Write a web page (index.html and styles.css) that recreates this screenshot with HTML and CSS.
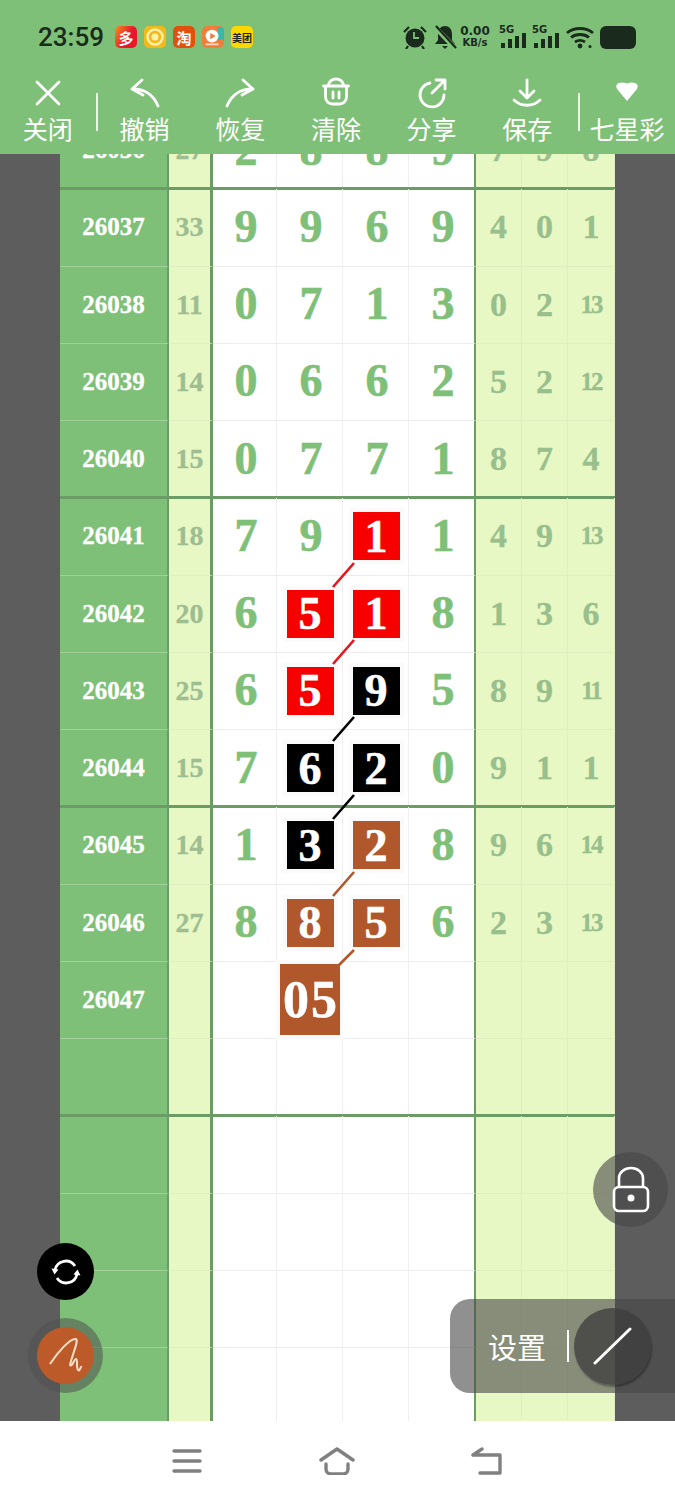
FILE: index.html
```html
<!DOCTYPE html>
<html lang="zh">
<head>
  <title>七星彩</title>
  <meta charset="UTF-8">
  <meta name="viewport" content="width=device-width, initial-scale=1.0">
  <link rel="stylesheet" href="styles.css">
</head>
<body>
  <div class="phone">
    <header class="top">
      <div class="status">
        <span class="status__time">23:59</span>
        <div class="status__apps">
          <span class="app app--red">多</span>
          <span class="app app--sun"><svg viewBox="0 0 22 22" width="22" height="22"><circle cx="11" cy="11" r="7.500" fill="none" stroke="#fff0a8" stroke-width="2.500"/><circle cx="11" cy="11" r="3.500" fill="#fff0a8"/></svg></span>
          <span class="app app--tao">淘</span>
          <span class="app app--video"><svg viewBox="0 0 24 22" width="24" height="22"><path d="M17 0h7v14h-7z" fill="#37b8a8"/><circle cx="11" cy="10" r="7" fill="#fff"/><path d="M9 6.500l6 3.500-6 3.500z" fill="#ef7d3c"/><path d="M4 19h14" stroke="#ffd9b8" stroke-width="2"/></svg></span>
          <span class="app app--mt">美团</span>
        </div>
        <div class="status__right">
          <svg class="ico" viewBox="0 0 26 24" width="26" height="24"><circle cx="13" cy="13" r="9.500" fill="#1a2a1c"/><path d="M12 7v6h5" fill="none" stroke="#7fc078" stroke-width="1.800"/><path d="M2 7l5-5M24 7l-5-5M6 21l-2 3M20 21l2 3" stroke="#1a2a1c" stroke-width="2.200"/></svg>
          <svg class="ico" viewBox="0 0 24 24" width="24" height="24"><path d="M12 1c-4 0-7 3-7 8v6l-3 4h20l-3-4V9c0-5-3-8-7-8z" fill="#1a2a1c"/><path d="M9 21h6l-3 3z" fill="#1a2a1c"/><path d="M1 1l21 22" stroke="#7fc078" stroke-width="5"/><path d="M3 1l20 22" stroke="#1a2a1c" stroke-width="2.200"/></svg>
          <div class="speed"><b>0.00</b><span>KB/s</span></div>
          <div class="signal"><i class="signal__tag">5G</i><svg viewBox="0 0 28 24" width="28" height="24"><path d="M2 18h4v5H2zM9 14h4v9H9zM16 11h4v12h-4zM23 8h4v15h-4z" fill="#1a2a1c"/></svg></div>
          <div class="signal"><i class="signal__tag">5G</i><svg viewBox="0 0 28 24" width="28" height="24"><path d="M2 18h4v5H2zM9 14h4v9H9zM16 11h4v12h-4zM23 8h4v15h-4z" fill="#1a2a1c"/></svg></div>
          <svg class="ico" viewBox="0 0 30 24" width="30" height="24"><path d="M2 8c7-6 19-6 26 0M6 12.500c5-4 13-4 18 0M10 17c3-2 7-2 10 0" fill="none" stroke="#1a2a1c" stroke-width="2.800"/><circle cx="15" cy="21" r="2.400" fill="#1a2a1c"/><circle cx="25" cy="21.500" r="1.500" fill="#1a2a1c"/></svg>
          <span class="battery"></span>
        </div>
      </div>
      <nav class="tools">
        <a class="tool"><svg viewBox="0 0 32 32" width="32" height="32"><path d="M5 5l22 22M27 5L5 27"/></svg><span>关闭</span></a>
        <i class="tools__sep"></i>
        <a class="tool"><svg viewBox="0 0 32 32" width="32" height="32"><path d="M13 3L3 12l11 6M3 12c13 0 21 5 26 17"/></svg><span>撤销</span></a>
        <a class="tool"><svg viewBox="0 0 32 32" width="32" height="32"><path d="M19 3l10 9-11 6M29 12C16 12 8 17 3 29"/></svg><span>恢复</span></a>
        <a class="tool"><svg viewBox="0 0 32 32" width="32" height="32"><path d="M8 9c1-4 4-7 8-7s7 3 8 7M3.500 9h25M5.500 9v11a7 7 0 0 0 7 7h7a7 7 0 0 0 7-7V9M13 15v6M19 15v6"/></svg><span>清除</span></a>
        <a class="tool"><svg viewBox="0 0 32 32" width="32" height="32"><path d="M14 6a12 12 0 1 0 14 12M16 16L29 3M20 3h9v9"/></svg><span>分享</span></a>
        <a class="tool"><svg viewBox="0 0 32 32" width="32" height="32"><path d="M16 3v18M9 14l7 7 7-7M3 23c7 7 19 7 26 0"/></svg><span>保存</span></a>
        <i class="tools__sep tools__sep--end"></i>
        <a class="tool"><svg viewBox="0 0 32 32" width="32" height="32"><path class="solid" d="M5.500 8c2-3 7-3 10.500-1.500 3.500-1.500 8.500-1.500 10.500 1.500.5 1.500 0 3-1 4.500L16 24 6.500 12.500c-1-1.500-1.500-3-1-4.500z"/></svg><span>七星彩</span></a>
      </nav>
    </header>

    <main class="stage">
      <div class="board">
        <div class="row"><b class="id">26036</b><b class="sum">27</b><b class="n">2</b><b class="n">8</b><b class="n">8</b><b class="n">9</b><b class="m">7</b><b class="m">9</b><b class="m">8</b></div>

        <div class="row row--first"><b class="id">26037</b><b class="sum">33</b><b class="n">9</b><b class="n">9</b><b class="n">6</b><b class="n">9</b><b class="m">4</b><b class="m">0</b><b class="m">1</b></div>
        <div class="row"><b class="id">26038</b><b class="sum">11</b><b class="n">0</b><b class="n">7</b><b class="n">1</b><b class="n">3</b><b class="m">0</b><b class="m">2</b><b class="m m--sm">13</b></div>
        <div class="row"><b class="id">26039</b><b class="sum">14</b><b class="n">0</b><b class="n">6</b><b class="n">6</b><b class="n">2</b><b class="m">5</b><b class="m">2</b><b class="m m--sm">12</b></div>
        <div class="row"><b class="id">26040</b><b class="sum">15</b><b class="n">0</b><b class="n">7</b><b class="n">7</b><b class="n">1</b><b class="m">8</b><b class="m">7</b><b class="m">4</b></div>

        <div class="row row--first"><b class="id">26041</b><b class="sum">18</b><b class="n">7</b><b class="n">9</b><b class="n"><em class="box box--red">1</em></b><b class="n">1</b><b class="m">4</b><b class="m">9</b><b class="m m--sm">13</b></div>
        <div class="row"><b class="id">26042</b><b class="sum">20</b><b class="n">6</b><b class="n"><em class="box box--red">5</em></b><b class="n"><em class="box box--red">1</em></b><b class="n">8</b><b class="m">1</b><b class="m">3</b><b class="m">6</b></div>
        <div class="row"><b class="id">26043</b><b class="sum">25</b><b class="n">6</b><b class="n"><em class="box box--red">5</em></b><b class="n"><em class="box box--black">9</em></b><b class="n">5</b><b class="m">8</b><b class="m">9</b><b class="m m--sm">11</b></div>
        <div class="row"><b class="id">26044</b><b class="sum">15</b><b class="n">7</b><b class="n"><em class="box box--black">6</em></b><b class="n"><em class="box box--black">2</em></b><b class="n">0</b><b class="m">9</b><b class="m">1</b><b class="m">1</b></div>

        <div class="row row--first"><b class="id">26045</b><b class="sum">14</b><b class="n">1</b><b class="n"><em class="box box--black">3</em></b><b class="n"><em class="box box--rust">2</em></b><b class="n">8</b><b class="m">9</b><b class="m">6</b><b class="m m--sm">14</b></div>
        <div class="row"><b class="id">26046</b><b class="sum">27</b><b class="n">8</b><b class="n"><em class="box box--rust">8</em></b><b class="n"><em class="box box--rust">5</em></b><b class="n">6</b><b class="m">2</b><b class="m">3</b><b class="m m--sm">13</b></div>
        <div class="row"><b class="id">26047</b><b class="sum"></b><b class="n"></b><b class="n"><em class="box box--big">05</em></b><b class="n"></b><b class="n"></b><b class="m"></b><b class="m"></b><b class="m"></b></div>
        <div class="row"><b class="id"></b><b class="sum"></b><b class="n"></b><b class="n"></b><b class="n"></b><b class="n"></b><b class="m"></b><b class="m"></b><b class="m"></b></div>

        <div class="row row--first"><b class="id"></b><b class="sum"></b><b class="n"></b><b class="n"></b><b class="n"></b><b class="n"></b><b class="m"></b><b class="m"></b><b class="m"></b></div>
        <div class="row"><b class="id"></b><b class="sum"></b><b class="n"></b><b class="n"></b><b class="n"></b><b class="n"></b><b class="m"></b><b class="m"></b><b class="m"></b></div>
        <div class="row"><b class="id"></b><b class="sum"></b><b class="n"></b><b class="n"></b><b class="n"></b><b class="n"></b><b class="m"></b><b class="m"></b><b class="m"></b></div>
        <div class="row"><b class="id"></b><b class="sum"></b><b class="n"></b><b class="n"></b><b class="n"></b><b class="n"></b><b class="m"></b><b class="m"></b><b class="m"></b></div>
      </div>

      <!-- links between the marked numbers, drawn over the board -->
      <svg class="links" viewBox="0 0 675 1267" width="675" height="1267">
        <path class="link-red" d="M354 409l-21 24M354 486l-21 24"/>
        <path class="link-black" d="M354 563l-21 24M354 641l-21 24"/>
        <path class="link-rust" d="M354 718l-21 24M354 796l-15 15"/>
      </svg>

      <button class="fab fab--sync"><svg viewBox="0 0 32 32" width="32" height="32"><path d="M5 14a11 11 0 0 1 20-4M27 18a11 11 0 0 1-20 4" fill="none" stroke="#fff" stroke-width="2.800"/><path d="M1.500 12.500l7 1-4 5zM30.500 19.500l-7-1 4-5z" fill="#fff"/></svg></button>
      <div class="pen"><button class="fab fab--pen"><svg viewBox="0 0 40 40" width="40" height="40"><path d="M4 28C12 16 24 2 30 3c3 2-4 16-6 26 2 3 4-6 6-6s0 9 2 11 2-4 4-3" fill="none" stroke="#ffe0c8" stroke-width="2"/></svg></button></div>
      <button class="fab fab--lock"><svg viewBox="0 0 40 50" width="40" height="50"><path d="M8 22V13a12 10 0 0 1 24 0v9" fill="none" stroke="#fff" stroke-width="2.600"/><rect x="3" y="22" width="34" height="24" rx="5" fill="none" stroke="#fff" stroke-width="2.600"/><circle cx="20" cy="33" r="3.500" fill="#fff"/></svg></button>
      <div class="setting">
        <span>设置</span>
        <i class="setting__sep"></i>
        <button class="fab fab--line"><svg viewBox="0 0 40 40" width="40" height="40"><path d="M2 37L37 3" stroke="#fff" stroke-width="3" stroke-linecap="round"/></svg></button>
      </div>
    </main>

    <footer class="navbar">
      <svg viewBox="0 0 30 24" width="30" height="24"><path d="M2 2h26M2 12h26M2 22h26"/></svg>
      <svg viewBox="0 0 36 28" width="36" height="28"><path d="M2 13L18 2l16 11M7 17v5a5 5 0 0 0 5 5h12a5 5 0 0 0 5-5v-5"/></svg>
      <svg viewBox="0 0 32 28" width="32" height="28"><path d="M2 8h27v18H9M2 8l9-6"/></svg>
    </footer>
  </div>
</body>
</html>
```

FILE: styles.css
```css
* {
  box-sizing: border-box;
}

html,
body {
  margin: 0;
  padding: 0;
}

body {
  font-family: "Noto Sans CJK SC", "Noto Sans", sans-serif;
}

.phone {
  width: 675px;
  height: 1500px;
  display: flex;
  flex-direction: column;
  overflow: hidden;
  background: #fff;
}

/* top bar */
.top {
  height: 154px;
  flex: none;
  background: #7fc078;
  position: relative;
  z-index: 2;
}

.status {
  height: 72px;
  padding: 20px 0 0 38px;
  display: flex;
  align-items: flex-start;
  color: #1a2a1c;
}

.status__time {
  width: 77px;
  font-family: "Roboto", sans-serif;
  font-size: 26px;
  font-weight: 500;
  line-height: 34px;
}

.status__apps {
  display: flex;
  gap: 7px;
  padding-top: 6px;
}

.app {
  width: 22px;
  height: 22px;
  border-radius: 5px;
  display: flex;
  align-items: center;
  justify-content: center;
  font-size: 15px;
  font-weight: 700;
  color: #fff;
  overflow: hidden;
}

.app--red {
  background: linear-gradient(120deg, #f7941d, #e8172c 55%);
}

.app--sun {
  background: #f2b91a;
}

.app--tao {
  background: #e2500f;
}

.app--video {
  background: #ef7d3c;
}

.app--mt {
  background: #fcd800;
  color: #222;
  font-size: 10px;
}

.status__right {
  margin-left: 149px;
  display: flex;
  align-items: center;
  height: 34px;
  gap: 5px;
}

.ico {
  display: block;
}

.speed {
  width: 32px;
  margin: 0 3px 0 -3px;
  text-align: center;
  font-family: "DejaVu Sans", sans-serif;
  line-height: 11px;
}

.speed b {
  display: block;
  font-size: 12px;
}

.speed span {
  display: block;
  font-size: 10px;
  font-weight: 700;
}

.signal {
  position: relative;
  width: 28px;
  height: 24px;
}

.signal__tag {
  position: absolute;
  left: 0;
  top: 0;
  font: 700 10px/10px "DejaVu Sans", sans-serif;
}

.signal svg {
  display: block;
}

.battery {
  width: 36px;
  height: 23px;
  border-radius: 6px;
  background: #1a2a1c;
}

.tools {
  height: 82px;
  display: flex;
  align-items: flex-start;
  color: #fff;
}

.tool {
  width: 95.7px;
  padding-top: 5px;
  display: flex;
  flex-direction: column;
  align-items: center;
  flex: none;
}

.tool svg {
  fill: none;
  stroke: #fff;
  stroke-width: 2.800;
  stroke-linecap: round;
  stroke-linejoin: round;
  display: block;
}

.tool svg .solid {
  fill: #fff;
  stroke: none;
}

.tool span {
  font-size: 25px;
  line-height: 36px;
  margin-top: 1px;
}

.tools__sep {
  width: 2px;
  height: 38px;
  margin: 21px -1px 0 0;
  background: #e9f5e6;
  flex: none;
}

.tools__sep--end {
  margin-left: 3px;
}

/* board */
.stage {
  flex: 1;
  position: relative;
  background: #5d5d5d;
  overflow: hidden;
}

.board {
  width: 555px;
  margin: -42px 0 0 60px;
  display: flex;
  flex-direction: column;
}

.row {
  height: 77.25px;
  flex: none;
  display: grid;
  grid-template-columns: 109px 44px 64px 66px 66px 67px 46px 46px 47px;
  font-family: "Liberation Serif", serif;
}

.row > b {
  display: flex;
  align-items: center;
  justify-content: center;
  border-bottom: 1px solid #ececec;
}

.id {
  background: #7fc078;
  color: #fff;
  font-size: 25px;
  -webkit-text-stroke: 0.3px #fff;
  border-right: 2px solid #6b9c65;
  border-bottom-color: #9fd098 !important;
}

.sum {
  background: #e8f8c4;
  color: #9ebd90;
  font-size: 28px;
  -webkit-text-stroke: 0.3px #9ebd90;
  border-right: 3px solid #6b9c65;
  border-bottom-color: #dfefc0 !important;
}

.row > .n {
  padding: 0 0 2px 3px;
}

.n {
  background: #fff;
  color: #7fc078;
  font-size: 46px;
  -webkit-text-stroke: 0.6px #7fc078;
  border-right: 1px solid #efefef;
}

.n:nth-child(6) {
  border-right: 2px solid #6b9c65;
}

.m {
  background: #e8f8c4;
  color: #98bf8c;
  font-size: 34px;
  -webkit-text-stroke: 0.3px #98bf8c;
  border-right: 1px solid #dfefc0;
  border-bottom-color: #dfefc0 !important;
}

.m--sm {
  font-size: 25px;
  letter-spacing: -2px;
}

.row--first > b {
  box-shadow: 0 -2px 0 #6b9c65, inset 0 1px 0 #6b9c65;
}

.box {
  width: 47px;
  height: 48px;
  margin: 2px 0 0 -2px;
  display: flex;
  align-items: center;
  justify-content: center;
  font-style: normal;
  color: #fff;
  -webkit-text-stroke: 0.6px #fff;
  box-shadow: 0 0 0 4px #fafafa;
}

.box--red {
  background: #f70000;
}

.box--black {
  background: #000;
}

.box--rust,
.box--big {
  background: #b0582c;
}

.box--big {
  width: 60px;
  height: 71px;
  margin: 2px 0 0 -3px;
  padding-left: 3px;
  letter-spacing: 2px;
  font-size: 52px;
}

.links {
  position: absolute;
  left: 0;
  top: 0;
  fill: none;
  stroke-width: 2.600;
}

.link-red {
  stroke: #e8141c;
}

.link-black {
  stroke: #000;
}

.link-rust {
  stroke: #b0582c;
}

/* floating buttons */
.fab {
  border: 0;
  padding: 0;
  border-radius: 50%;
  display: flex;
  align-items: center;
  justify-content: center;
}

.fab--sync {
  position: absolute;
  left: 37px;
  top: 1089px;
  width: 57px;
  height: 57px;
  background: #000;
}

.pen {
  position: absolute;
  left: 28px;
  top: 1164px;
  width: 75px;
  height: 75px;
  border-radius: 50%;
  background: rgba(80, 80, 80, 0.55);
  display: flex;
  align-items: center;
  justify-content: center;
}

.fab--pen {
  width: 57px;
  height: 57px;
  background: #bd5a2a;
}

.fab--lock {
  position: absolute;
  left: 593px;
  top: 998px;
  width: 75px;
  height: 75px;
  background: rgba(70, 70, 70, 0.6);
}

.setting {
  position: absolute;
  left: 450px;
  top: 1145px;
  width: 225px;
  height: 94px;
  padding-left: 38px;
  border-radius: 20px 0 0 20px;
  background: rgba(70, 70, 70, 0.6);
  display: flex;
  align-items: center;
  color: #fff;
  font-size: 29px;
}

.setting__sep {
  width: 2px;
  height: 32px;
  margin-left: 21px;
  background: #fff;
}

.fab--line {
  width: 77px;
  height: 77px;
  margin-left: 5px;
  background: rgba(60, 60, 60, 0.75);
  box-shadow: 1px 2px 2px rgba(0, 0, 0, 0.35);
}

/* bottom bar */
.navbar {
  height: 79px;
  flex: none;
  background: #fff;
  display: flex;
  align-items: center;
  padding: 0 172px;
  justify-content: space-between;
}

.navbar svg {
  fill: none;
  stroke: #808080;
  stroke-width: 3.400;
  stroke-linecap: round;
  stroke-linejoin: round;
}
```
